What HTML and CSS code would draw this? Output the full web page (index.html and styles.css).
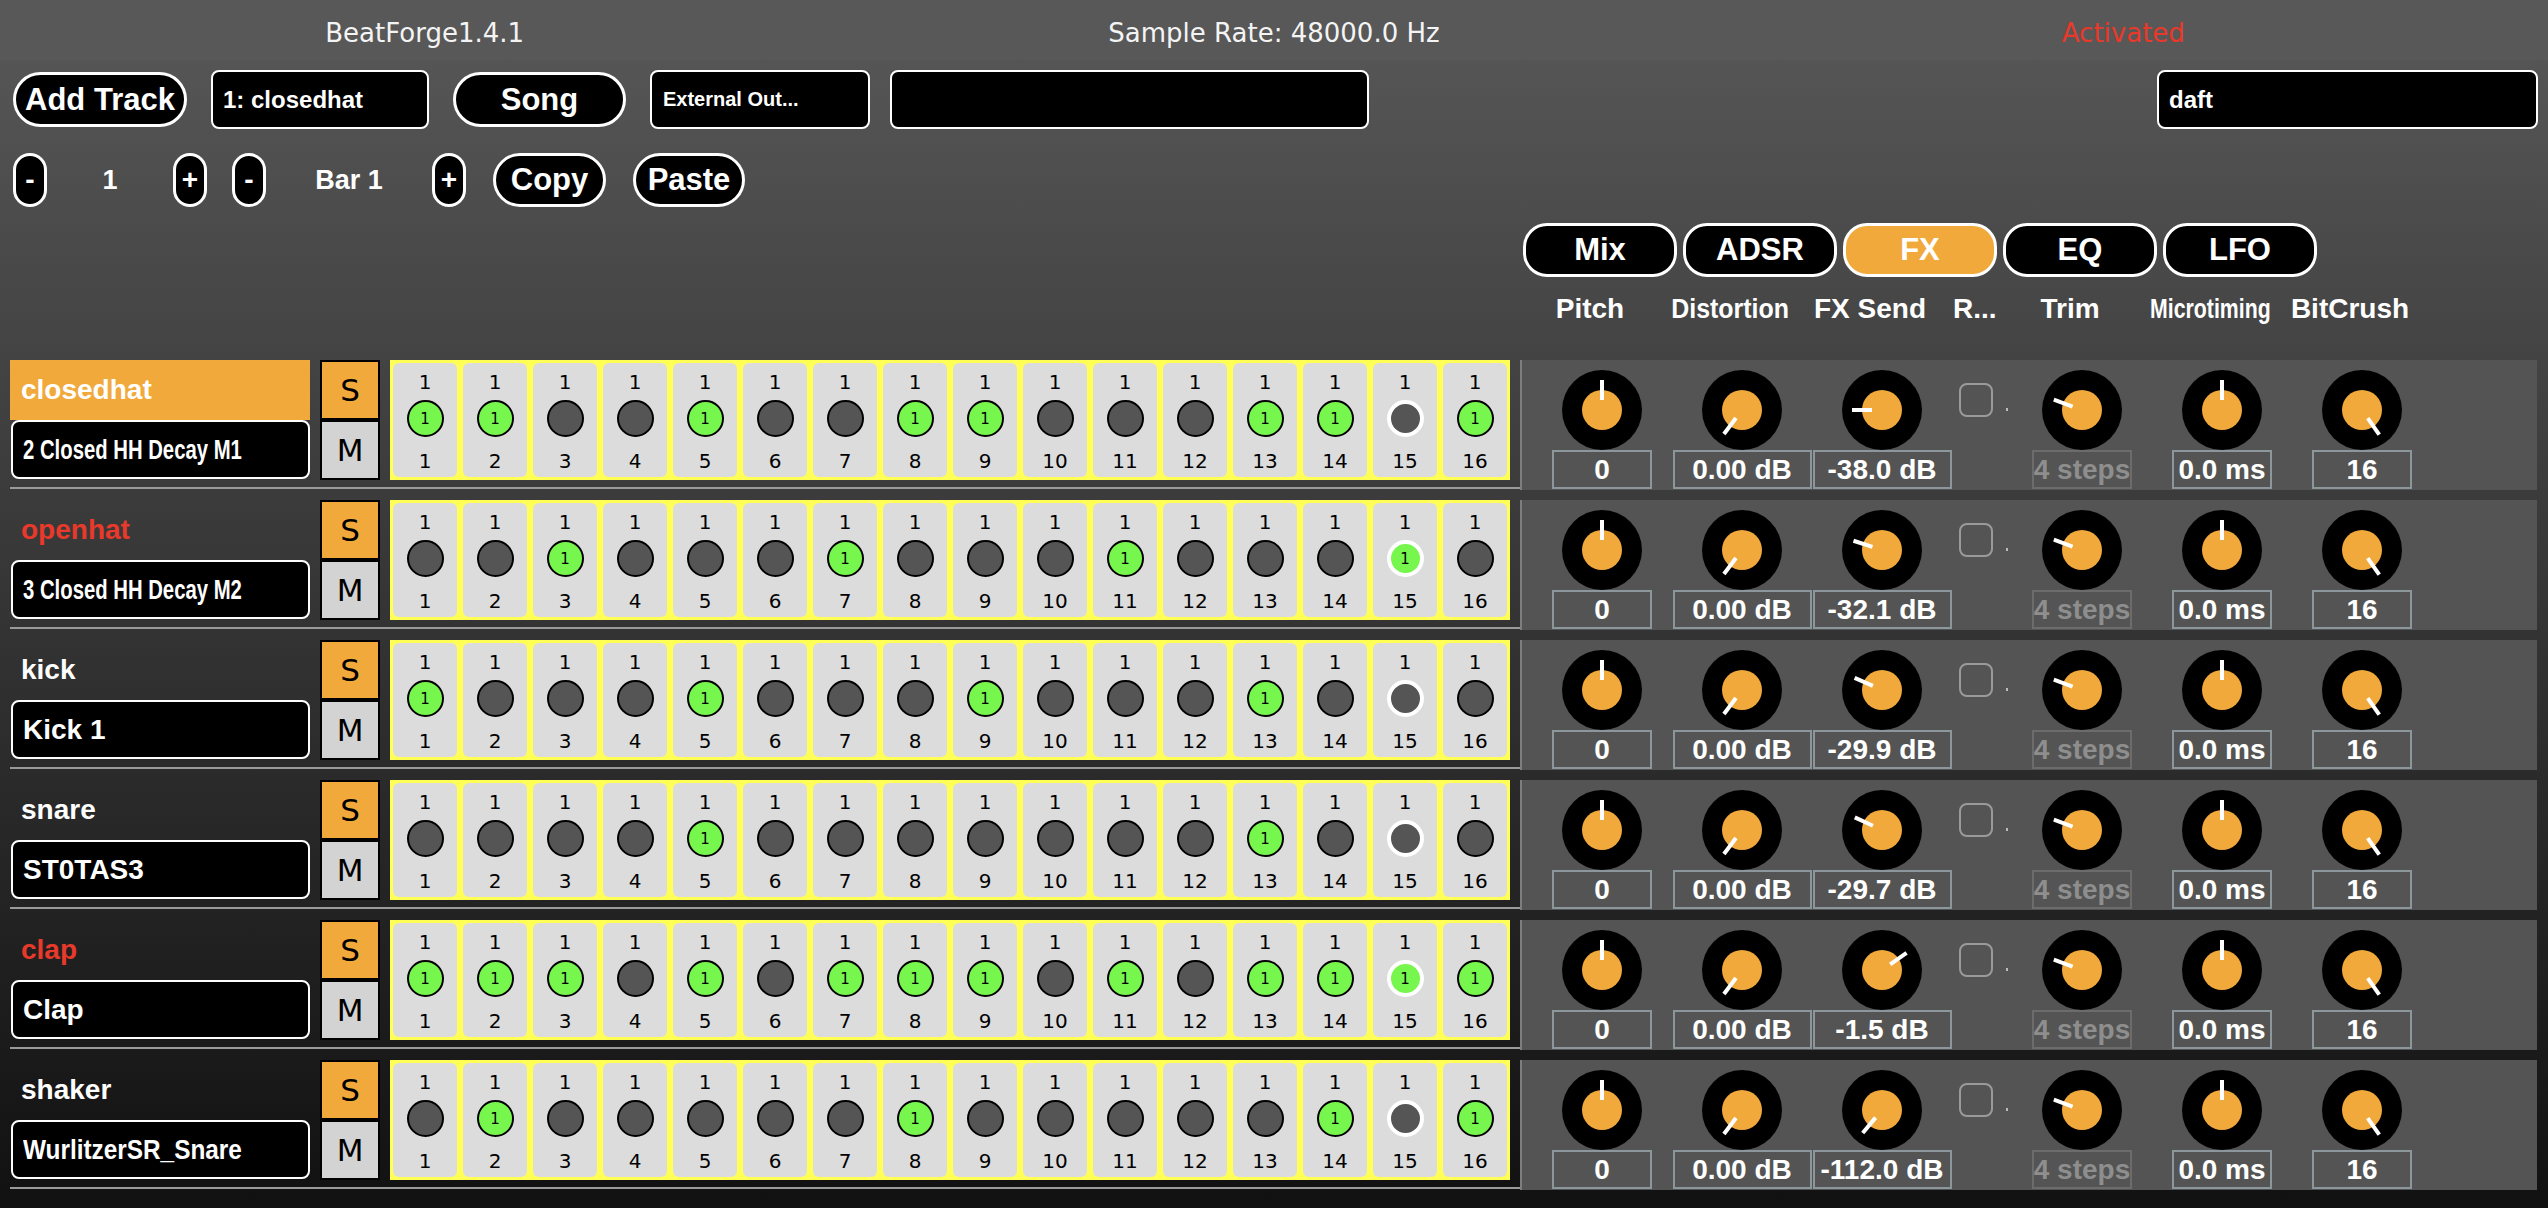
FILE: index.html
```html
<!DOCTYPE html>
<html>
<head>
<meta charset="utf-8">
<title>BeatForge</title>
<link rel="stylesheet" href="styles.css">
</head>
<body>
<div class="topbar">
  <div>BeatForge1.4.1</div>
  <div>Sample Rate: 48000.0 Hz</div>
  <div class="activated">Activated</div>
</div>

<div class="toolbar tb1">
  <div class="pill w-add">Add Track</div>
  <div class="box w-trk">1: closedhat</div>
  <div class="pill w-song">Song</div>
  <div class="box w-ext small">External Out...</div>
  <div class="box w-empty"></div>
  <div class="box w-daft">daft</div>
</div>

<div class="toolbar tb2">
  <div class="spill">-</div>
  <div class="num w-n1">1</div>
  <div class="spill">+</div>
  <div class="spill ml25">-</div>
  <div class="num w-bar">Bar 1</div>
  <div class="spill">+</div>
  <div class="pill2 w-copy">Copy</div>
  <div class="pill2 w-paste">Paste</div>
</div>

<div class="tabs">
  <div class="tab">Mix</div>
  <div class="tab">ADSR</div>
  <div class="tab active">FX</div>
  <div class="tab">EQ</div>
  <div class="tab">LFO</div>
</div>

<div class="labels">
  <div class="lab">Pitch</div>
  <div class="lab"><span class="fit" style="--sx:0.89">Distortion</span></div>
  <div class="lab">FX Send</div>
  <div class="lab lab-r">R...</div>
  <div class="lab">Trim</div>
  <div class="lab"><span class="fit" style="--sx:0.76">Microtiming</span></div>
  <div class="lab">BitCrush</div>
</div>

<div class="tracks">

  <!-- Track 1 -->
  <div class="track">
    <div class="left">
      <div class="trow">
        <div class="namecol">
          <div class="tname sel">closedhat</div>
          <div class="sample"><span class="fitl" style="--sx:0.725">2 Closed HH Decay M1</span></div>
        </div>
        <div class="sm"><div class="s">S</div><div class="m">M</div></div>
        <div class="steps">
          <div class="step"><span class="n">1</span><span class="dot on">1</span><span class="b">1</span></div>
          <div class="step"><span class="n">1</span><span class="dot on">1</span><span class="b">2</span></div>
          <div class="step"><span class="n">1</span><span class="dot"></span><span class="b">3</span></div>
          <div class="step"><span class="n">1</span><span class="dot"></span><span class="b">4</span></div>
          <div class="step"><span class="n">1</span><span class="dot on">1</span><span class="b">5</span></div>
          <div class="step"><span class="n">1</span><span class="dot"></span><span class="b">6</span></div>
          <div class="step"><span class="n">1</span><span class="dot"></span><span class="b">7</span></div>
          <div class="step"><span class="n">1</span><span class="dot on">1</span><span class="b">8</span></div>
          <div class="step"><span class="n">1</span><span class="dot on">1</span><span class="b">9</span></div>
          <div class="step"><span class="n">1</span><span class="dot"></span><span class="b">10</span></div>
          <div class="step"><span class="n">1</span><span class="dot"></span><span class="b">11</span></div>
          <div class="step"><span class="n">1</span><span class="dot"></span><span class="b">12</span></div>
          <div class="step"><span class="n">1</span><span class="dot on">1</span><span class="b">13</span></div>
          <div class="step"><span class="n">1</span><span class="dot on">1</span><span class="b">14</span></div>
          <div class="step"><span class="n">1</span><span class="dot ph"></span><span class="b">15</span></div>
          <div class="step"><span class="n">1</span><span class="dot on">1</span><span class="b">16</span></div>
        </div>
      </div>
      <div class="sep"></div>
    </div>
    <div class="panel">
      <div class="kcol"><svg class="knob" viewBox="0 0 80 80"><circle cx="40" cy="40" r="40"/><circle class="kin" cx="40" cy="40" r="20"/><line x1="40" y1="30" x2="40" y2="10" transform="rotate(0 40 40)"/></svg><div class="val">0</div></div>
      <div class="kcol"><svg class="knob" viewBox="0 0 80 80"><circle cx="40" cy="40" r="40"/><circle class="kin" cx="40" cy="40" r="20"/><line x1="40" y1="30" x2="40" y2="10" transform="rotate(-143 40 40)"/></svg><div class="val wide">0.00 dB</div></div>
      <div class="kcol"><svg class="knob" viewBox="0 0 80 80"><circle cx="40" cy="40" r="40"/><circle class="kin" cx="40" cy="40" r="20"/><line x1="40" y1="30" x2="40" y2="10" transform="rotate(-90 40 40)"/></svg><div class="val wide">-38.0 dB</div></div>
      <div class="ccol"><div class="chk"></div><div class="dotmark"></div></div>
      <div class="kcol"><svg class="knob" viewBox="0 0 80 80"><circle cx="40" cy="40" r="40"/><circle class="kin" cx="40" cy="40" r="20"/><line x1="40" y1="30" x2="40" y2="10" transform="rotate(-70 40 40)"/></svg><div class="val dim">4 steps</div></div>
      <div class="kcol"><svg class="knob" viewBox="0 0 80 80"><circle cx="40" cy="40" r="40"/><circle class="kin" cx="40" cy="40" r="20"/><line x1="40" y1="30" x2="40" y2="10" transform="rotate(0 40 40)"/></svg><div class="val">0.0 ms</div></div>
      <div class="kcol"><svg class="knob" viewBox="0 0 80 80"><circle cx="40" cy="40" r="40"/><circle class="kin" cx="40" cy="40" r="20"/><line x1="40" y1="30" x2="40" y2="10" transform="rotate(145 40 40)"/></svg><div class="val">16</div></div>
    </div>
  </div>

  <!-- Track 2 -->
  <div class="track">
    <div class="left">
      <div class="trow">
        <div class="namecol">
          <div class="tname red">openhat</div>
          <div class="sample"><span class="fitl" style="--sx:0.725">3 Closed HH Decay M2</span></div>
        </div>
        <div class="sm"><div class="s">S</div><div class="m">M</div></div>
        <div class="steps">
          <div class="step"><span class="n">1</span><span class="dot"></span><span class="b">1</span></div>
          <div class="step"><span class="n">1</span><span class="dot"></span><span class="b">2</span></div>
          <div class="step"><span class="n">1</span><span class="dot on">1</span><span class="b">3</span></div>
          <div class="step"><span class="n">1</span><span class="dot"></span><span class="b">4</span></div>
          <div class="step"><span class="n">1</span><span class="dot"></span><span class="b">5</span></div>
          <div class="step"><span class="n">1</span><span class="dot"></span><span class="b">6</span></div>
          <div class="step"><span class="n">1</span><span class="dot on">1</span><span class="b">7</span></div>
          <div class="step"><span class="n">1</span><span class="dot"></span><span class="b">8</span></div>
          <div class="step"><span class="n">1</span><span class="dot"></span><span class="b">9</span></div>
          <div class="step"><span class="n">1</span><span class="dot"></span><span class="b">10</span></div>
          <div class="step"><span class="n">1</span><span class="dot on">1</span><span class="b">11</span></div>
          <div class="step"><span class="n">1</span><span class="dot"></span><span class="b">12</span></div>
          <div class="step"><span class="n">1</span><span class="dot"></span><span class="b">13</span></div>
          <div class="step"><span class="n">1</span><span class="dot"></span><span class="b">14</span></div>
          <div class="step"><span class="n">1</span><span class="dot on ph">1</span><span class="b">15</span></div>
          <div class="step"><span class="n">1</span><span class="dot"></span><span class="b">16</span></div>
        </div>
      </div>
      <div class="sep"></div>
    </div>
    <div class="panel">
      <div class="kcol"><svg class="knob" viewBox="0 0 80 80"><circle cx="40" cy="40" r="40"/><circle class="kin" cx="40" cy="40" r="20"/><line x1="40" y1="30" x2="40" y2="10" transform="rotate(0 40 40)"/></svg><div class="val">0</div></div>
      <div class="kcol"><svg class="knob" viewBox="0 0 80 80"><circle cx="40" cy="40" r="40"/><circle class="kin" cx="40" cy="40" r="20"/><line x1="40" y1="30" x2="40" y2="10" transform="rotate(-143 40 40)"/></svg><div class="val wide">0.00 dB</div></div>
      <div class="kcol"><svg class="knob" viewBox="0 0 80 80"><circle cx="40" cy="40" r="40"/><circle class="kin" cx="40" cy="40" r="20"/><line x1="40" y1="30" x2="40" y2="10" transform="rotate(-72 40 40)"/></svg><div class="val wide">-32.1 dB</div></div>
      <div class="ccol"><div class="chk"></div><div class="dotmark"></div></div>
      <div class="kcol"><svg class="knob" viewBox="0 0 80 80"><circle cx="40" cy="40" r="40"/><circle class="kin" cx="40" cy="40" r="20"/><line x1="40" y1="30" x2="40" y2="10" transform="rotate(-70 40 40)"/></svg><div class="val dim">4 steps</div></div>
      <div class="kcol"><svg class="knob" viewBox="0 0 80 80"><circle cx="40" cy="40" r="40"/><circle class="kin" cx="40" cy="40" r="20"/><line x1="40" y1="30" x2="40" y2="10" transform="rotate(0 40 40)"/></svg><div class="val">0.0 ms</div></div>
      <div class="kcol"><svg class="knob" viewBox="0 0 80 80"><circle cx="40" cy="40" r="40"/><circle class="kin" cx="40" cy="40" r="20"/><line x1="40" y1="30" x2="40" y2="10" transform="rotate(145 40 40)"/></svg><div class="val">16</div></div>
    </div>
  </div>

  <!-- Track 3 -->
  <div class="track">
    <div class="left">
      <div class="trow">
        <div class="namecol">
          <div class="tname">kick</div>
          <div class="sample"><span class="fitl">Kick 1</span></div>
        </div>
        <div class="sm"><div class="s">S</div><div class="m">M</div></div>
        <div class="steps">
          <div class="step"><span class="n">1</span><span class="dot on">1</span><span class="b">1</span></div>
          <div class="step"><span class="n">1</span><span class="dot"></span><span class="b">2</span></div>
          <div class="step"><span class="n">1</span><span class="dot"></span><span class="b">3</span></div>
          <div class="step"><span class="n">1</span><span class="dot"></span><span class="b">4</span></div>
          <div class="step"><span class="n">1</span><span class="dot on">1</span><span class="b">5</span></div>
          <div class="step"><span class="n">1</span><span class="dot"></span><span class="b">6</span></div>
          <div class="step"><span class="n">1</span><span class="dot"></span><span class="b">7</span></div>
          <div class="step"><span class="n">1</span><span class="dot"></span><span class="b">8</span></div>
          <div class="step"><span class="n">1</span><span class="dot on">1</span><span class="b">9</span></div>
          <div class="step"><span class="n">1</span><span class="dot"></span><span class="b">10</span></div>
          <div class="step"><span class="n">1</span><span class="dot"></span><span class="b">11</span></div>
          <div class="step"><span class="n">1</span><span class="dot"></span><span class="b">12</span></div>
          <div class="step"><span class="n">1</span><span class="dot on">1</span><span class="b">13</span></div>
          <div class="step"><span class="n">1</span><span class="dot"></span><span class="b">14</span></div>
          <div class="step"><span class="n">1</span><span class="dot ph"></span><span class="b">15</span></div>
          <div class="step"><span class="n">1</span><span class="dot"></span><span class="b">16</span></div>
        </div>
      </div>
      <div class="sep"></div>
    </div>
    <div class="panel">
      <div class="kcol"><svg class="knob" viewBox="0 0 80 80"><circle cx="40" cy="40" r="40"/><circle class="kin" cx="40" cy="40" r="20"/><line x1="40" y1="30" x2="40" y2="10" transform="rotate(0 40 40)"/></svg><div class="val">0</div></div>
      <div class="kcol"><svg class="knob" viewBox="0 0 80 80"><circle cx="40" cy="40" r="40"/><circle class="kin" cx="40" cy="40" r="20"/><line x1="40" y1="30" x2="40" y2="10" transform="rotate(-143 40 40)"/></svg><div class="val wide">0.00 dB</div></div>
      <div class="kcol"><svg class="knob" viewBox="0 0 80 80"><circle cx="40" cy="40" r="40"/><circle class="kin" cx="40" cy="40" r="20"/><line x1="40" y1="30" x2="40" y2="10" transform="rotate(-66 40 40)"/></svg><div class="val wide">-29.9 dB</div></div>
      <div class="ccol"><div class="chk"></div><div class="dotmark"></div></div>
      <div class="kcol"><svg class="knob" viewBox="0 0 80 80"><circle cx="40" cy="40" r="40"/><circle class="kin" cx="40" cy="40" r="20"/><line x1="40" y1="30" x2="40" y2="10" transform="rotate(-70 40 40)"/></svg><div class="val dim">4 steps</div></div>
      <div class="kcol"><svg class="knob" viewBox="0 0 80 80"><circle cx="40" cy="40" r="40"/><circle class="kin" cx="40" cy="40" r="20"/><line x1="40" y1="30" x2="40" y2="10" transform="rotate(0 40 40)"/></svg><div class="val">0.0 ms</div></div>
      <div class="kcol"><svg class="knob" viewBox="0 0 80 80"><circle cx="40" cy="40" r="40"/><circle class="kin" cx="40" cy="40" r="20"/><line x1="40" y1="30" x2="40" y2="10" transform="rotate(145 40 40)"/></svg><div class="val">16</div></div>
    </div>
  </div>

  <!-- Track 4 -->
  <div class="track">
    <div class="left">
      <div class="trow">
        <div class="namecol">
          <div class="tname">snare</div>
          <div class="sample"><span class="fitl">ST0TAS3</span></div>
        </div>
        <div class="sm"><div class="s">S</div><div class="m">M</div></div>
        <div class="steps">
          <div class="step"><span class="n">1</span><span class="dot"></span><span class="b">1</span></div>
          <div class="step"><span class="n">1</span><span class="dot"></span><span class="b">2</span></div>
          <div class="step"><span class="n">1</span><span class="dot"></span><span class="b">3</span></div>
          <div class="step"><span class="n">1</span><span class="dot"></span><span class="b">4</span></div>
          <div class="step"><span class="n">1</span><span class="dot on">1</span><span class="b">5</span></div>
          <div class="step"><span class="n">1</span><span class="dot"></span><span class="b">6</span></div>
          <div class="step"><span class="n">1</span><span class="dot"></span><span class="b">7</span></div>
          <div class="step"><span class="n">1</span><span class="dot"></span><span class="b">8</span></div>
          <div class="step"><span class="n">1</span><span class="dot"></span><span class="b">9</span></div>
          <div class="step"><span class="n">1</span><span class="dot"></span><span class="b">10</span></div>
          <div class="step"><span class="n">1</span><span class="dot"></span><span class="b">11</span></div>
          <div class="step"><span class="n">1</span><span class="dot"></span><span class="b">12</span></div>
          <div class="step"><span class="n">1</span><span class="dot on">1</span><span class="b">13</span></div>
          <div class="step"><span class="n">1</span><span class="dot"></span><span class="b">14</span></div>
          <div class="step"><span class="n">1</span><span class="dot ph"></span><span class="b">15</span></div>
          <div class="step"><span class="n">1</span><span class="dot"></span><span class="b">16</span></div>
        </div>
      </div>
      <div class="sep"></div>
    </div>
    <div class="panel">
      <div class="kcol"><svg class="knob" viewBox="0 0 80 80"><circle cx="40" cy="40" r="40"/><circle class="kin" cx="40" cy="40" r="20"/><line x1="40" y1="30" x2="40" y2="10" transform="rotate(0 40 40)"/></svg><div class="val">0</div></div>
      <div class="kcol"><svg class="knob" viewBox="0 0 80 80"><circle cx="40" cy="40" r="40"/><circle class="kin" cx="40" cy="40" r="20"/><line x1="40" y1="30" x2="40" y2="10" transform="rotate(-143 40 40)"/></svg><div class="val wide">0.00 dB</div></div>
      <div class="kcol"><svg class="knob" viewBox="0 0 80 80"><circle cx="40" cy="40" r="40"/><circle class="kin" cx="40" cy="40" r="20"/><line x1="40" y1="30" x2="40" y2="10" transform="rotate(-65 40 40)"/></svg><div class="val wide">-29.7 dB</div></div>
      <div class="ccol"><div class="chk"></div><div class="dotmark"></div></div>
      <div class="kcol"><svg class="knob" viewBox="0 0 80 80"><circle cx="40" cy="40" r="40"/><circle class="kin" cx="40" cy="40" r="20"/><line x1="40" y1="30" x2="40" y2="10" transform="rotate(-70 40 40)"/></svg><div class="val dim">4 steps</div></div>
      <div class="kcol"><svg class="knob" viewBox="0 0 80 80"><circle cx="40" cy="40" r="40"/><circle class="kin" cx="40" cy="40" r="20"/><line x1="40" y1="30" x2="40" y2="10" transform="rotate(0 40 40)"/></svg><div class="val">0.0 ms</div></div>
      <div class="kcol"><svg class="knob" viewBox="0 0 80 80"><circle cx="40" cy="40" r="40"/><circle class="kin" cx="40" cy="40" r="20"/><line x1="40" y1="30" x2="40" y2="10" transform="rotate(145 40 40)"/></svg><div class="val">16</div></div>
    </div>
  </div>

  <!-- Track 5 -->
  <div class="track">
    <div class="left">
      <div class="trow">
        <div class="namecol">
          <div class="tname red">clap</div>
          <div class="sample"><span class="fitl">Clap</span></div>
        </div>
        <div class="sm"><div class="s">S</div><div class="m">M</div></div>
        <div class="steps">
          <div class="step"><span class="n">1</span><span class="dot on">1</span><span class="b">1</span></div>
          <div class="step"><span class="n">1</span><span class="dot on">1</span><span class="b">2</span></div>
          <div class="step"><span class="n">1</span><span class="dot on">1</span><span class="b">3</span></div>
          <div class="step"><span class="n">1</span><span class="dot"></span><span class="b">4</span></div>
          <div class="step"><span class="n">1</span><span class="dot on">1</span><span class="b">5</span></div>
          <div class="step"><span class="n">1</span><span class="dot"></span><span class="b">6</span></div>
          <div class="step"><span class="n">1</span><span class="dot on">1</span><span class="b">7</span></div>
          <div class="step"><span class="n">1</span><span class="dot on">1</span><span class="b">8</span></div>
          <div class="step"><span class="n">1</span><span class="dot on">1</span><span class="b">9</span></div>
          <div class="step"><span class="n">1</span><span class="dot"></span><span class="b">10</span></div>
          <div class="step"><span class="n">1</span><span class="dot on">1</span><span class="b">11</span></div>
          <div class="step"><span class="n">1</span><span class="dot"></span><span class="b">12</span></div>
          <div class="step"><span class="n">1</span><span class="dot on">1</span><span class="b">13</span></div>
          <div class="step"><span class="n">1</span><span class="dot on">1</span><span class="b">14</span></div>
          <div class="step"><span class="n">1</span><span class="dot on ph">1</span><span class="b">15</span></div>
          <div class="step"><span class="n">1</span><span class="dot on">1</span><span class="b">16</span></div>
        </div>
      </div>
      <div class="sep"></div>
    </div>
    <div class="panel">
      <div class="kcol"><svg class="knob" viewBox="0 0 80 80"><circle cx="40" cy="40" r="40"/><circle class="kin" cx="40" cy="40" r="20"/><line x1="40" y1="30" x2="40" y2="10" transform="rotate(0 40 40)"/></svg><div class="val">0</div></div>
      <div class="kcol"><svg class="knob" viewBox="0 0 80 80"><circle cx="40" cy="40" r="40"/><circle class="kin" cx="40" cy="40" r="20"/><line x1="40" y1="30" x2="40" y2="10" transform="rotate(-143 40 40)"/></svg><div class="val wide">0.00 dB</div></div>
      <div class="kcol"><svg class="knob" viewBox="0 0 80 80"><circle cx="40" cy="40" r="40"/><circle class="kin" cx="40" cy="40" r="20"/><line x1="40" y1="30" x2="40" y2="10" transform="rotate(55 40 40)"/></svg><div class="val wide">-1.5 dB</div></div>
      <div class="ccol"><div class="chk"></div><div class="dotmark"></div></div>
      <div class="kcol"><svg class="knob" viewBox="0 0 80 80"><circle cx="40" cy="40" r="40"/><circle class="kin" cx="40" cy="40" r="20"/><line x1="40" y1="30" x2="40" y2="10" transform="rotate(-70 40 40)"/></svg><div class="val dim">4 steps</div></div>
      <div class="kcol"><svg class="knob" viewBox="0 0 80 80"><circle cx="40" cy="40" r="40"/><circle class="kin" cx="40" cy="40" r="20"/><line x1="40" y1="30" x2="40" y2="10" transform="rotate(0 40 40)"/></svg><div class="val">0.0 ms</div></div>
      <div class="kcol"><svg class="knob" viewBox="0 0 80 80"><circle cx="40" cy="40" r="40"/><circle class="kin" cx="40" cy="40" r="20"/><line x1="40" y1="30" x2="40" y2="10" transform="rotate(145 40 40)"/></svg><div class="val">16</div></div>
    </div>
  </div>

  <!-- Track 6 -->
  <div class="track">
    <div class="left">
      <div class="trow">
        <div class="namecol">
          <div class="tname">shaker</div>
          <div class="sample"><span class="fitl" style="--sx:0.87">WurlitzerSR_Snare</span></div>
        </div>
        <div class="sm"><div class="s">S</div><div class="m">M</div></div>
        <div class="steps">
          <div class="step"><span class="n">1</span><span class="dot"></span><span class="b">1</span></div>
          <div class="step"><span class="n">1</span><span class="dot on">1</span><span class="b">2</span></div>
          <div class="step"><span class="n">1</span><span class="dot"></span><span class="b">3</span></div>
          <div class="step"><span class="n">1</span><span class="dot"></span><span class="b">4</span></div>
          <div class="step"><span class="n">1</span><span class="dot"></span><span class="b">5</span></div>
          <div class="step"><span class="n">1</span><span class="dot"></span><span class="b">6</span></div>
          <div class="step"><span class="n">1</span><span class="dot"></span><span class="b">7</span></div>
          <div class="step"><span class="n">1</span><span class="dot on">1</span><span class="b">8</span></div>
          <div class="step"><span class="n">1</span><span class="dot"></span><span class="b">9</span></div>
          <div class="step"><span class="n">1</span><span class="dot"></span><span class="b">10</span></div>
          <div class="step"><span class="n">1</span><span class="dot"></span><span class="b">11</span></div>
          <div class="step"><span class="n">1</span><span class="dot"></span><span class="b">12</span></div>
          <div class="step"><span class="n">1</span><span class="dot"></span><span class="b">13</span></div>
          <div class="step"><span class="n">1</span><span class="dot on">1</span><span class="b">14</span></div>
          <div class="step"><span class="n">1</span><span class="dot ph"></span><span class="b">15</span></div>
          <div class="step"><span class="n">1</span><span class="dot on">1</span><span class="b">16</span></div>
        </div>
      </div>
      <div class="sep"></div>
    </div>
    <div class="panel">
      <div class="kcol"><svg class="knob" viewBox="0 0 80 80"><circle cx="40" cy="40" r="40"/><circle class="kin" cx="40" cy="40" r="20"/><line x1="40" y1="30" x2="40" y2="10" transform="rotate(0 40 40)"/></svg><div class="val">0</div></div>
      <div class="kcol"><svg class="knob" viewBox="0 0 80 80"><circle cx="40" cy="40" r="40"/><circle class="kin" cx="40" cy="40" r="20"/><line x1="40" y1="30" x2="40" y2="10" transform="rotate(-143 40 40)"/></svg><div class="val wide">0.00 dB</div></div>
      <div class="kcol"><svg class="knob" viewBox="0 0 80 80"><circle cx="40" cy="40" r="40"/><circle class="kin" cx="40" cy="40" r="20"/><line x1="40" y1="30" x2="40" y2="10" transform="rotate(-140 40 40)"/></svg><div class="val wide">-112.0 dB</div></div>
      <div class="ccol"><div class="chk"></div><div class="dotmark"></div></div>
      <div class="kcol"><svg class="knob" viewBox="0 0 80 80"><circle cx="40" cy="40" r="40"/><circle class="kin" cx="40" cy="40" r="20"/><line x1="40" y1="30" x2="40" y2="10" transform="rotate(-70 40 40)"/></svg><div class="val dim">4 steps</div></div>
      <div class="kcol"><svg class="knob" viewBox="0 0 80 80"><circle cx="40" cy="40" r="40"/><circle class="kin" cx="40" cy="40" r="20"/><line x1="40" y1="30" x2="40" y2="10" transform="rotate(0 40 40)"/></svg><div class="val">0.0 ms</div></div>
      <div class="kcol"><svg class="knob" viewBox="0 0 80 80"><circle cx="40" cy="40" r="40"/><circle class="kin" cx="40" cy="40" r="20"/><line x1="40" y1="30" x2="40" y2="10" transform="rotate(145 40 40)"/></svg><div class="val">16</div></div>
    </div>
  </div>

</div>
</body>
</html>
```

FILE: styles.css
```css
* { box-sizing: border-box; }
html, body { margin: 0; padding: 0; }
body {
  width: 2548px;
  height: 1208px;
  overflow: hidden;
  font-family: "Liberation Sans", Arial, sans-serif;
  color: #fff;
  background: linear-gradient(to bottom, #585858 0, #585858 60px, #555555 60px, #111111 1208px);
}

/* header */
.topbar {
  height: 60px;
  display: grid;
  grid-template-columns: 1fr 1fr 1fr;
  font-family: "DejaVu Sans", sans-serif;
  font-size: 26px;
  line-height: 60px;
  padding-top: 3px;
  color: #f4f4f4;
  text-align: center;
}
.activated { color: #e8392a; }

/* toolbars */
.toolbar { display: flex; align-items: center; padding-left: 13px; }
.tb1 { margin-top: 10px; height: 59px; }
.tb2 { margin-top: 24px; height: 54px; }

.pill {
  height: 55px;
  border: 3px solid #fff;
  border-radius: 28px;
  background: #000;
  font-weight: bold;
  font-size: 31px;
  display: flex;
  align-items: center;
  justify-content: center;
  white-space: nowrap;
}
.box {
  height: 59px;
  border: 2px solid #fff;
  border-radius: 8px;
  background: #000;
  font-weight: bold;
  font-size: 24px;
  display: flex;
  align-items: center;
  padding-left: 10px;
  white-space: nowrap;
}
.box.small { font-size: 20px; padding-left: 11px; }
.w-add { width: 174px; margin-right: 24px; }
.w-trk { width: 218px; margin-right: 24px; }
.w-song { width: 173px; margin-right: 24px; }
.w-ext { width: 220px; margin-right: 20px; }
.w-empty { width: 479px; }
.w-daft { width: 381px; margin-left: auto; margin-right: 10px; }

.spill {
  width: 34px;
  height: 54px;
  border: 3px solid #fff;
  border-radius: 17px;
  background: #000;
  font-weight: bold;
  font-size: 28px;
  display: flex;
  align-items: center;
  justify-content: center;
}
.ml25 { margin-left: 25px; }
.num {
  font-weight: bold;
  font-size: 27px;
  text-align: center;
}
.w-n1 { width: 126px; }
.w-bar { width: 166px; }
.pill2 {
  height: 54px;
  border: 3px solid #fff;
  border-radius: 27px;
  background: #000;
  font-weight: bold;
  font-size: 31px;
  display: flex;
  align-items: center;
  justify-content: center;
}
.w-copy { width: 113px; margin-left: 27px; }
.w-paste { width: 112px; margin-left: 27px; }

/* tabs */
.tabs {
  margin-top: 16px;
  height: 54px;
  padding-left: 1523px;
  display: flex;
  gap: 6px;
}
.tab {
  width: 154px;
  height: 54px;
  border: 3px solid #fff;
  border-radius: 24px;
  background: #000;
  font-weight: bold;
  font-size: 31px;
  display: flex;
  align-items: center;
  justify-content: center;
}
.tab.active { background: #f1a93c; }

/* labels */
.labels {
  margin-top: 18px;
  height: 28px;
  padding-left: 1520px;
  display: grid;
  grid-template-columns: 140px 140px 140px 60px 140px 140px 140px;
  font-weight: bold;
  font-size: 28px;
  line-height: 28px;
}
.lab { display: flex; justify-content: center; white-space: nowrap; }
.lab-r { justify-content: flex-start; padding-left: 13px; }
.fit { display: inline-block; transform: scaleX(var(--sx, 1)); }

/* tracks */
.tracks { margin-top: 37px; }
.track {
  display: grid;
  grid-template-columns: 1520px 1017px;
  height: 130px;
  margin-bottom: 10px;
}
.left { padding-left: 10px; }
.trow { display: flex; height: 120px; }
.sep { margin-top: 7px; height: 2px; background: #9a9a9a; }

.namecol { width: 300px; display: flex; flex-direction: column; }
.tname {
  height: 60px;
  padding-left: 11px;
  font-weight: bold;
  font-size: 28px;
  line-height: 60px;
  color: #fff;
}
.tname.sel { background: #f1a93c; }
.tname.red { color: #e8392a; }
.sample {
  height: 59px;
  margin-left: 1px;
  border: 2px solid #fff;
  border-radius: 8px;
  background: #000;
  padding-left: 10px;
  display: flex;
  align-items: center;
  font-weight: bold;
  font-size: 28px;
  white-space: nowrap;
  overflow: hidden;
}
.fitl { display: inline-block; transform-origin: left center; transform: scaleX(var(--sx, 1)); }

.sm {
  margin-left: 10px;
  width: 60px;
  height: 120px;
  background: #000;
  padding: 2px;
  display: flex;
  flex-direction: column;
  gap: 4px;
  font-family: "DejaVu Sans", sans-serif;
  font-size: 31px;
  color: #000;
}
.sm .s, .sm .m {
  height: 56px;
  display: flex;
  align-items: center;
  justify-content: center;
}
.sm .s { background: #f1a93c; }
.sm .m { background: #d3d3d3; }

.steps {
  margin-left: 10px;
  width: 1120px;
  height: 120px;
  background: #ffff55;
  padding: 3px;
  display: flex;
  gap: 6px;
}
.step {
  width: 64px;
  height: 114px;
  background: #dcdcdc;
  border-radius: 6px;
  display: flex;
  flex-direction: column;
  align-items: center;
  font-family: "DejaVu Sans", sans-serif;
  color: #000;
}
.step .n { height: 37px; line-height: 38px; font-size: 20px; }
.step .b { padding-top: 8px; line-height: 32px; font-size: 20px; }
.dot {
  width: 37px;
  height: 37px;
  border-radius: 50%;
  border: 2px solid #000;
  background: #555;
  display: flex;
  align-items: center;
  justify-content: center;
  font-size: 15px;
  color: #000;
}
.dot.on { background: #77f64d; }
.dot.ph { border: 4px solid #fff; }

/* right panel */
.panel {
  height: 130px;
  border-left: 2px solid #7e7e7e;
  background: #545454;
  padding: 10px 0 0 10px;
  display: flex;
}
.kcol {
  width: 140px;
  display: flex;
  flex-direction: column;
  align-items: center;
}
.knob { width: 80px; height: 80px; display: block; }
.knob circle { fill: #000; }
.knob .kin { fill: #f1a93c; }
.knob line { stroke: #fff; stroke-width: 4; }
.val {
  width: 100px;
  height: 39px;
  border: 2px solid #8c979c;
  font-weight: bold;
  font-size: 28px;
  display: flex;
  align-items: center;
  justify-content: center;
  white-space: nowrap;
}
.val.wide { width: 139px; }
.val.dim { color: #8e8e8e; border-color: #6c6c6c; }

.ccol { width: 60px; position: relative; }
.chk {
  margin-left: 7px;
  margin-top: 13px;
  width: 34px;
  height: 34px;
  border: 2px solid #9a9a9a;
  border-radius: 8px;
}
.dotmark {
  position: absolute;
  left: 54px;
  top: 38px;
  width: 2px;
  height: 3px;
  background: #bbb;
}
```
